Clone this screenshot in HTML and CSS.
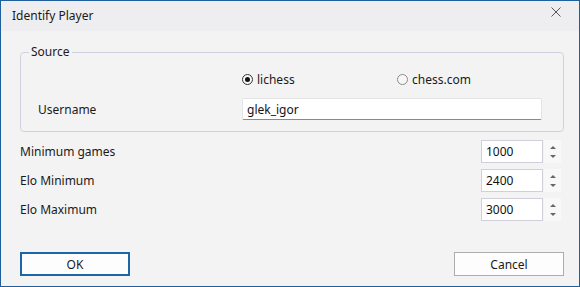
FILE: index.html
```html
<!DOCTYPE html>
<html>
  <head>
    <meta charset="utf-8" />
    <title>Identify Player</title>
    <link rel="stylesheet" href="styles.css">
  </head>
  <body>
    <div class="window">
      <!-- タイトルバー -->
      <div class="titlebar">
        <span class="title">Identify Player</span>
        <svg class="close" width="10" height="10" viewBox="0 0 10 10">
          <path d="M0.5 0.5 L9.5 9.5 M9.5 0.5 L0.5 9.5" stroke="#555" stroke-width="1" fill="none" />
        </svg>
      </div>

      <div class="content">
        <!-- ソース選択 -->
        <fieldset class="group">
          <legend>Source</legend>
          <div class="radios">
            <label class="radio first">
              <span class="dot checked"></span>
              lichess
            </label>
            <label class="radio">
              <span class="dot"></span>
              chess.com
            </label>
          </div>
          <div class="user-row">
            <span class="user-label">Username</span>
            <input class="textbox" type="text" value="glek_igor" />
          </div>
        </fieldset>

        <!-- 数値設定 -->
        <div class="num-row">
          <span class="num-label">Minimum games</span>
          <input class="numbox" type="text" value="1000" />
          <div class="spin"><span class="up"></span><span class="down"></span></div>
        </div>
        <div class="num-row">
          <span class="num-label">Elo Minimum</span>
          <input class="numbox" type="text" value="2400" />
          <div class="spin"><span class="up"></span><span class="down"></span></div>
        </div>
        <div class="num-row">
          <span class="num-label">Elo Maximum</span>
          <input class="numbox" type="text" value="3000" />
          <div class="spin"><span class="up"></span><span class="down"></span></div>
        </div>

        <!-- ボタン -->
        <div class="buttons">
          <button class="btn default">OK</button>
          <button class="btn">Cancel</button>
        </div>
      </div>
    </div>
  </body>
</html>
```

FILE: styles.css
```css
body {
  margin: 0;
  font-family: "Noto Sans", "Liberation Sans", sans-serif;
  font-size: 12px;
  color: #1a1a1a;
}
.window {
  width: 580px;
  height: 287px;
  box-sizing: border-box;
  border: 1px solid #1f5f9c;
  background-color: #f3f3f3;
  display: flex;
  flex-direction: column;
}
.titlebar {
  height: 30px;
  background-color: #eeeef0;
  display: flex;
  align-items: center;
  justify-content: space-between;
  padding: 0 18px 0 11px;
}
.title {
  margin-top: -1px;
}
.close {
  margin-top: -8px;
}
.content {
  flex: 1;
  display: flex;
  flex-direction: column;
  padding: 13px 15px 0 19px;
}
.group {
  margin: 0;
  padding: 9px 0 11px 0;
  border: 1px solid #cfd1e0;
  border-radius: 4px;
  min-width: 0;
}
.group legend {
  margin-left: 8px;
  padding: 0 2px;
  line-height: 16px;
}
.radios {
  display: flex;
  height: 20px;
  align-items: center;
  padding-left: 221px;
}
.radio {
  display: flex;
  align-items: center;
  gap: 4px;
}
.radio.first {
  width: 155px;
}
.dot {
  width: 11px;
  height: 11px;
  box-sizing: border-box;
  border: 1px solid #8b8b8b;
  border-radius: 50%;
  background-color: #f7f7f7;
  display: flex;
  align-items: center;
  justify-content: center;
}
.dot.checked {
  border-color: #333;
}
.dot.checked::after {
  content: "";
  width: 5px;
  height: 5px;
  border-radius: 50%;
  background-color: #111;
}
.user-row {
  display: flex;
  align-items: center;
  margin-top: 9px;
  padding-left: 17px;
}
.user-label {
  width: 204px;
}
.textbox {
  width: 300px;
  height: 22px;
  box-sizing: border-box;
  border: 1px solid #e4e4e4;
  border-bottom: 1px solid #8a8a8a;
  border-radius: 2px;
  background-color: #fff;
  padding: 0 4px;
  font: inherit;
  color: #111;
  outline: none;
}
.num-row {
  display: flex;
  align-items: center;
  margin-top: 6px;
}
.group + .num-row {
  margin-top: 8px;
}
.num-label {
  flex: 1;
}
.numbox {
  width: 62px;
  height: 23px;
  box-sizing: border-box;
  border: 1px solid #cfd0dc;
  background-color: #fff;
  padding: 0 4px;
  font: inherit;
  color: #111;
  outline: none;
}
.spin {
  width: 17px;
  height: 23px;
  margin-left: 1px;
  margin-right: 3px;
  background-color: #f8f8f8;
  display: flex;
  flex-direction: column;
  align-items: center;
  justify-content: space-between;
  padding: 6px 0 5px;
  box-sizing: border-box;
}
.spin .up {
  border-left: 3px solid transparent;
  border-right: 3px solid transparent;
  border-bottom: 3px solid #666;
}
.spin .down {
  border-left: 3px solid transparent;
  border-right: 3px solid transparent;
  border-top: 3px solid #666;
}
.buttons {
  display: flex;
  justify-content: space-between;
  margin-top: 31px;
}
.btn {
  width: 110px;
  height: 24px;
  box-sizing: border-box;
  border: 1px solid #adadad;
  background-color: #fdfdfd;
  font: inherit;
  color: #1a1a1a;
  padding: 0;
}
.btn.default {
  border: 2px solid #1e65a8;
}
```
